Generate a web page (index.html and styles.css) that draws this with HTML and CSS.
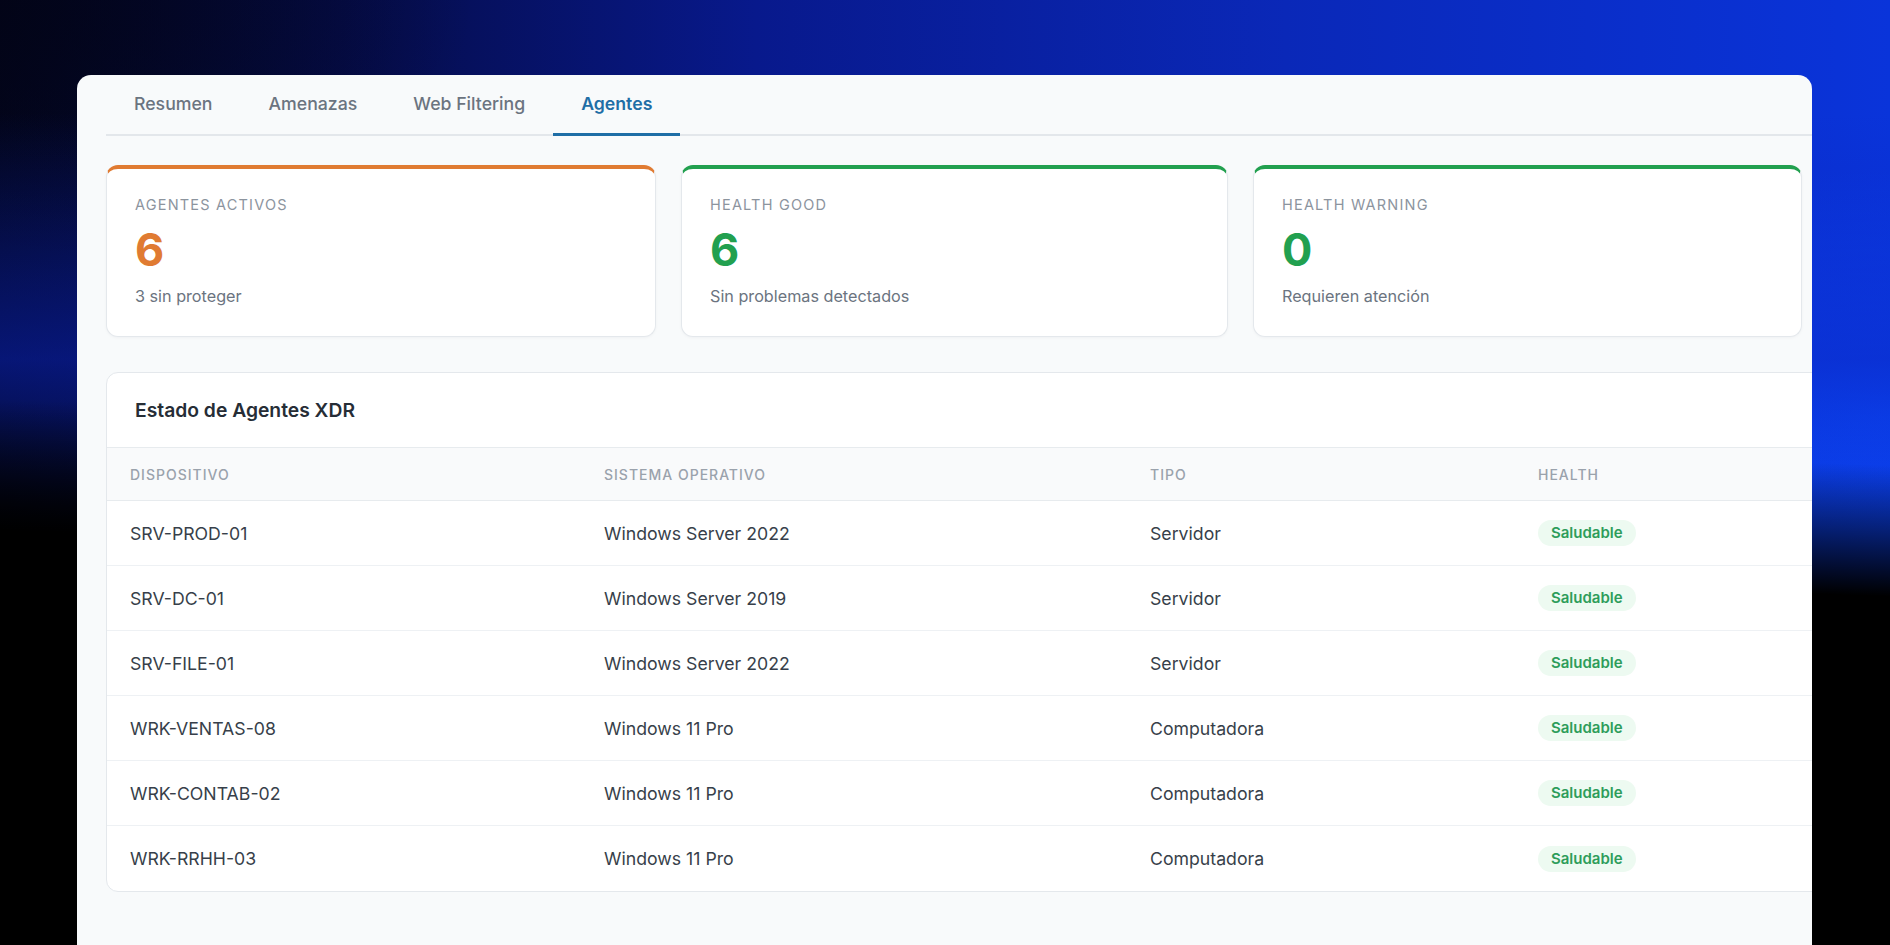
FILE: index.html
```html
<!DOCTYPE html>
<html lang="es">
<head>
    <meta charset="UTF-8">
    <meta name="viewport" content="width=device-width, initial-scale=1.0">
    <title>Agentes XDR</title>
    <link rel="stylesheet" href="styles.css">
</head>

<body>
    <div class="panel">
        <nav class="tabs">
            <a class="tab">Resumen</a>
            <a class="tab">Amenazas</a>
            <a class="tab">Web Filtering</a>
            <a class="tab active">Agentes</a>
        </nav>

        <div class="cards">
            <div class="card orange">
                <div class="card-label">Agentes activos</div>
                <div class="card-value">6</div>
                <div class="card-sub">3 sin proteger</div>
            </div>
            <div class="card green">
                <div class="card-label">Health good</div>
                <div class="card-value">6</div>
                <div class="card-sub">Sin problemas detectados</div>
            </div>
            <div class="card green">
                <div class="card-label">Health warning</div>
                <div class="card-value">0</div>
                <div class="card-sub">Requieren atención</div>
            </div>
        </div>

        <div class="table-card">
            <div class="table-title">Estado de Agentes XDR</div>
            <table>
                <thead>
                    <tr>
                        <th>Dispositivo</th>
                        <th>Sistema operativo</th>
                        <th>Tipo</th>
                        <th>Health</th>
                    </tr>
                </thead>
                <tbody>
                    <tr>
                        <td>SRV-PROD-01</td>
                        <td>Windows Server 2022</td>
                        <td>Servidor</td>
                        <td><span class="badge">Saludable</span></td>
                    </tr>
                    <tr>
                        <td>SRV-DC-01</td>
                        <td>Windows Server 2019</td>
                        <td>Servidor</td>
                        <td><span class="badge">Saludable</span></td>
                    </tr>
                    <tr>
                        <td>SRV-FILE-01</td>
                        <td>Windows Server 2022</td>
                        <td>Servidor</td>
                        <td><span class="badge">Saludable</span></td>
                    </tr>
                    <tr>
                        <td>WRK-VENTAS-08</td>
                        <td>Windows 11 Pro</td>
                        <td>Computadora</td>
                        <td><span class="badge">Saludable</span></td>
                    </tr>
                    <tr>
                        <td>WRK-CONTAB-02</td>
                        <td>Windows 11 Pro</td>
                        <td>Computadora</td>
                        <td><span class="badge">Saludable</span></td>
                    </tr>
                    <tr>
                        <td>WRK-RRHH-03</td>
                        <td>Windows 11 Pro</td>
                        <td>Computadora</td>
                        <td><span class="badge">Saludable</span></td>
                    </tr>
                </tbody>
            </table>
        </div>
    </div>
</body>
</html>
```

FILE: styles.css
```css
html, body {
    height: 100%;
}

body {
    margin: 0;
    padding: 75px 0 0 77px;
    box-sizing: border-box;
    overflow: hidden;
    font-family: Inter, "Noto Sans", sans-serif;
    background-color: #000;
    background-image:
        linear-gradient(182deg, rgba(0, 0, 0, 0) 0%, rgba(0, 0, 0, 0) 46%, #000 59%),
        linear-gradient(180deg, rgba(10, 35, 190, 0) 12%, rgba(10, 35, 190, 0.55) 38%, rgba(10, 35, 190, 0) 56%),
        radial-gradient(ellipse 35% 26% at 100% 44%, rgba(12, 76, 255, 0.85) 0%, rgba(12, 76, 255, 0) 100%),
        radial-gradient(ellipse 25% 30% at 0% 0%, rgba(2, 3, 20, 0.7) 0%, rgba(2, 3, 20, 0) 100%),
        linear-gradient(90deg, #03061e 0%, #050c48 18%, #08198c 40%, #0a28b8 68%, #0a34da 100%);
}

.panel {
    width: 1735px;
    height: 100%;
    box-sizing: border-box;
    padding-left: 29px;
    background: #f8fafb;
    border-radius: 14px 14px 0 0;
    overflow: hidden;
}

.tabs {
    display: flex;
    border-bottom: 2px solid #e3e7eb;
}

.tab {
    padding: 19px 28px 19px;
    line-height: 20px;
    font-size: 17.7px;
    font-weight: 500;
    color: #6b7480;
    border-bottom: 3px solid transparent;
    margin-bottom: -2px;
    cursor: pointer;
}

.tab.active {
    color: #1f6ea6;
    font-weight: 600;
    border-bottom-color: #1f6ea6;
}

.cards {
    display: grid;
    grid-template-columns: 550px 547px 549px;
    gap: 25px;
    width: 1697px;
    margin-top: 29px;
}

.card {
    height: 172px;
    box-sizing: border-box;
    padding: 28px 28px 0;
    background: #fff;
    border: 1px solid #e4e8ec;
    border-top: 4px solid #e07b32;
    border-radius: 12px;
    box-shadow: 0 1px 3px rgba(15, 23, 42, 0.04);
}

.card.green {
    border-top-color: #22a04f;
}

.card-label {
    font-size: 14.5px;
    line-height: 16px;
    letter-spacing: 1.2px;
    text-transform: uppercase;
    color: #8c949e;
}

.card-value {
    margin-top: 12px;
    font-size: 45px;
    line-height: 50px;
    font-weight: 700;
    color: #e07b32;
}

.card.green .card-value {
    color: #22a04f;
}

.card-sub {
    margin-top: 11px;
    font-size: 16.2px;
    line-height: 20px;
    color: #6b7480;
}

.table-card {
    width: 1740px;
    margin-top: 35px;
    background: #fff;
    border: 1px solid #e4e8ec;
    border-radius: 12px;
    overflow: hidden;
}

.table-title {
    height: 74px;
    display: flex;
    align-items: center;
    padding: 0 28px;
    font-size: 19.3px;
    font-weight: 600;
    color: #262d36;
    border-bottom: 1px solid #e7ebee;
}

table {
    width: 100%;
    border-collapse: collapse;
    table-layout: fixed;
}

th {
    height: 52px;
    padding: 0 0 0 23px;
    text-align: left;
    font-size: 14px;
    font-weight: 500;
    letter-spacing: 1px;
    text-transform: uppercase;
    color: #9aa2ac;
    background: #f9fafb;
    border-bottom: 1px solid #e7ebee;
}

th:nth-child(1) { width: 451px; }
th:nth-child(2) { width: 523px; }
th:nth-child(3) { width: 365px; }

td {
    height: 64px;
    padding: 0 0 0 23px;
    font-size: 17.7px;
    color: #373f4a;
    border-bottom: 1px solid #eef1f4;
}

tbody tr:last-child td {
    border-bottom: none;
    height: 65px;
}

.badge {
    display: inline-block;
    padding: 0 13px;
    line-height: 26px;
    font-size: 15px;
    font-weight: 600;
    color: #2e9d5b;
    background: #edfaf1;
    border-radius: 13px;
}
```
